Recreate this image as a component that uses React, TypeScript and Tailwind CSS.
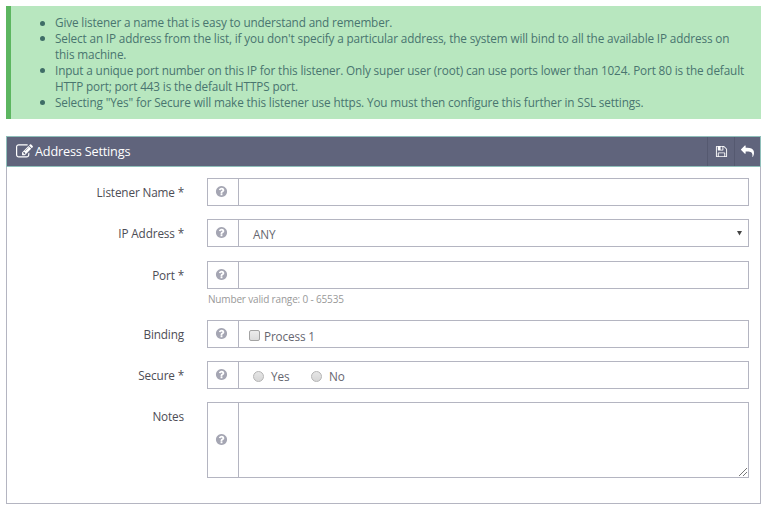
import type { ReactNode } from "react";

const ICONS = {
  edit: "M888 1184l116-116-152-152-116 116v56h96v96h56zm440-720q-16-16-33 1l-350 350q-17 17-1 33t33-1l350-350q17-17 1-33zm80 594v190q0 119-84.5 203.5t-203.5 84.5h-832q-119 0-203.5-84.5t-84.5-203.5v-832q0-119 84.5-203.5t203.5-84.5h832q63 0 117 25 15 7 18 23 3 17-9 29l-49 49q-14 14-32 8-23-6-45-6h-832q-66 0-113 47t-47 113v832q0 66 47 113t113 47h832q66 0 113-47t47-113v-126q0-13 9-22l64-64q15-15 35-7t20 29zm-96-738l288 288-672 672h-288v-288zm444 132l-92 92-288-288 92-92q28-28 68-28t68 28l152 152q28 28 28 68t-28 68z",
  save: "M512 1536h768v-384h-768v384zm896 0h128v-896q0-14-10-38.5t-20-34.5l-281-281q-10-10-34-20t-39-10v416q0 40-28 68t-68 28h-576q-40 0-68-28t-28-68v-416h-128v1280h128v-416q0-40 28-68t68-28h832q40 0 68 28t28 68v416zm-384-928v-320q0-13-9.5-22.5t-22.5-9.5h-192q-13 0-22.5 9.5t-9.5 22.5v320q0 13 9.5 22.5t22.5 9.5h192q13 0 22.5-9.5t9.5-22.5zm640 32v928q0 40-28 68t-68 28h-1344q-40 0-68-28t-28-68v-1344q0-40 28-68t68-28h928q40 0 88 20t76 48l280 280q28 28 48 76t20 88z",
  share: "M1792 640q0 26-19 45l-512 512q-19 19-45 19t-45-19-19-45v-256h-224q-98 0-175.5 6t-154 21.5-133 42.5-105.5 69.5-80 101-48.5 138.5-17.5 181q0 55 5 123 0 6 2.5 23.5t2.5 26.5q0 15-8.5 25t-23.5 10q-16 0-28-17-7-9-13-22t-13.5-30-10.5-24q-127-285-127-451 0-199 53-333 162-403 875-403h224v-256q0-26 19-45t45-19 45 19l512 512q19 19 19 45z",
  help: "M1024 1376v-192q0-14-9-23t-23-9h-192q-14 0-23 9t-9 23v192q0 14 9 23t23 9h192q14 0 23-9t9-23zm256-672q0-88-55.5-163t-138.5-116-170-41q-243 0-371 213-15 24 8 42l132 100q7 6 19 6 16 0 25-12 53-68 86-92 34-24 86-24 48 0 85.5 26t37.5 59q0 38-20 61t-68 45q-63 28-115.5 86.5t-52.5 125.5v36q0 14 9 23t23 9h192q14 0 23-9t9-23q0-19 21.5-49.5t54.5-49.5q32-18 49-28.5t46-35 44.5-48 28-60.5 12.5-81zm384 192q0 209-103 385.5t-279.5 279.5-385.5 103-385.5-103-279.5-279.5-103-385.5 103-385.5 279.5-279.5 385.5-103 385.5 103 279.5 279.5 103 385.5z",
};

function Icon({ name, className }: { name: keyof typeof ICONS; className: string }) {
  return (
    <svg viewBox="0 0 1792 1792" fill="currentColor" className={className}>
      <path d={ICONS[name]} />
    </svg>
  );
}

function Field({ label, tall, children }: { label: string; tall?: boolean; children?: ReactNode }) {
  return (
    <div className="flex">
      <div className="w-[177px] pt-[5px] text-right leading-[18px] text-[#4d4d55]">{label}</div>
      <div className={`ml-[23px] flex w-[542px] border border-[#b4b5c1] ${tall ? "h-[76px]" : "h-7"}`}>
        <div className="flex w-[31px] shrink-0 items-center justify-center border-r border-[#b4b5c1] pr-[3px] pb-px">
          <Icon name="help" className="size-[13px] text-[#a5a6b3]" />
        </div>
        <div className="flex grow">{children}</div>
      </div>
    </div>
  );
}

function Radio() {
  return <span className="size-[11px] rounded-full border border-[#b4b4b4] bg-linear-to-b from-[#e6e6e6] to-[#d6d6d6]" />;
}

const TIPS = [
  ["Give listener a name that is easy to understand and remember."],
  ["Select an IP address from the list, if you don't specify a particular address, the system will bind to all the available IP address on", "this machine."],
  ["Input a unique port number on this IP for this listener. Only super user (root) can use ports lower than 1024. Port 80 is the default", "HTTP port; port 443 is the default HTTPS port."],
  ['Selecting "Yes" for Secure will make this listener use https. You must then configure this further in SSL settings.'],
];

export default function App() {
  return (
    <div className="h-[508px] w-[768px] bg-white pt-1.5 pl-1.5 font-['Open_Sans',sans-serif] text-[11.75px] tracking-[-0.14px] text-[#666670]">
      <div className="h-[113px] w-[755px] border-l-5 border-[#5cb660] bg-[#b8e7bf] pt-[9px] text-[#49756f]">
        <ul className="flex flex-col">
          {TIPS.map((lines) => (
            <li key={lines[0]} className="flex pl-[29px] leading-[15.9px]">
              <span className="mt-[5.5px] mr-[10px] size-[5px] shrink-0 rounded-full bg-[#3f6d67]" />
              <div className="whitespace-nowrap">
                {lines.map((line) => <div key={line}>{line}</div>)}
              </div>
            </li>
          ))}
        </ul>
      </div>

      <div className="mt-[17px] h-[368px] w-[755px] border border-[#b4b5c1]">
        <div className="-mx-px -mt-px flex h-[31px] items-stretch border border-[#8fbfba] bg-[#60647c] text-white">
          <div className="flex grow items-center pl-[9px] text-[12.7px] tracking-[-0.19px]">
            <Icon name="edit" className="size-[17px]" />
            <span className="ml-[2px] pt-px">Address Settings</span>
          </div>
          <div className="flex w-[27px] items-center justify-center border-l border-[#555970]">
            <Icon name="save" className="size-[13px]" />
          </div>
          <div className="flex w-[26px] items-center justify-center border-l border-[#555970]">
            <Icon name="share" className="size-[13px] -scale-x-100" />
          </div>
        </div>

        <div className="flex flex-col pt-[11px]">
          <Field label="Listener Name *" />
          <div className="mt-[13px]">
            <Field label="IP Address *">
              <div className="flex grow items-center justify-between pt-[3px] pr-[6px] pl-[14px]">
                <span>ANY</span>
                <svg viewBox="0 0 6 6" className="mb-[4px] h-[6px] w-[5px] fill-[#444]"><path d="M0 0.5h6L3 6z" /></svg>
              </div>
            </Field>
          </div>
          <div className="mt-[14px]">
            <Field label="Port *" />
            <div className="h-[31px] pt-[3px] pl-[201px] text-[10px] leading-[14px] tracking-[-0.16px] text-[#999]">Number valid range: 0 - 65535</div>
          </div>
          <Field label="Binding">
            <div className="flex items-start pl-[10px]">
              <span className="mt-[9px] size-[11px] rounded-[2px] border border-[#a3a3a3] bg-linear-to-b from-[#ececec] to-[#dcdcdc]" />
              <span className="mt-[6px] ml-1 leading-[18px]">Process 1</span>
            </div>
          </Field>
          <div className="mt-[13px]">
            <Field label="Secure *">
              <div className="flex items-center pt-[3px] pl-[14px]">
                <Radio />
                <span className="ml-[7px] w-[40px]">Yes</span>
                <Radio />
                <span className="ml-[7px]">No</span>
              </div>
            </Field>
          </div>
          <div className="mt-[13px]">
            <Field label="Notes" tall>
              <div className="flex grow items-end justify-end p-px">
                <svg viewBox="0 0 8 8" className="size-2 stroke-[#777]"><path d="M0 8L8 0M4 8L8 4" /></svg>
              </div>
            </Field>
          </div>
        </div>
      </div>
    </div>
  );
}
